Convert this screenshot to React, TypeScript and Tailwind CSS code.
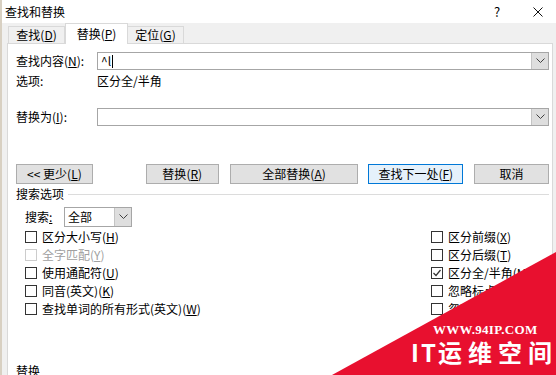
import React from 'react';

const leftOptions = [
  { label: '区分大小写', key: 'H' },
  { label: '全字匹配', key: 'Y', disabled: true },
  { label: '使用通配符', key: 'U' },
  { label: '同音(英文)', key: 'K' },
  { label: '查找单词的所有形式(英文)', key: 'W' },
];

const rightOptions = [
  { label: '区分前缀', key: 'X' },
  { label: '区分后缀', key: 'T' },
  { label: '区分全/半角', key: 'M', checked: true },
  { label: '忽略标点符号', key: 'S' },
  { label: '忽略空格', key: 'W' },
];

function Chevron() {
  return (
    <svg width="9" height="6" viewBox="0 0 9 6" fill="none">
      <polyline points="0.5,0.5 4.5,4.5 8.5,0.5" stroke="#404040" strokeWidth="1" />
    </svg>
  );
}

function DropButton() {
  return (
    <div className="w-[17px] h-full flex items-center justify-center bg-[#dedede] border-l border-[#c4c4c4]">
      <Chevron />
    </div>
  );
}

function Key({ k }: { k: string }) {
  return (
    <span>
      (<u className="underline-offset-1">{k}</u>)
    </span>
  );
}

function Checkbox({ label, k, checked, disabled }: { label: string; k: string; checked?: boolean; disabled?: boolean }) {
  return (
    <div className={`h-[18px] flex items-center gap-[5px] ${disabled ? 'text-[#a0a0a0]' : 'text-black'}`}>
      <div className={`w-[12px] h-[12px] border bg-white flex items-center justify-center ${disabled ? 'border-[#cccccc]' : 'border-[#333333]'}`}>
        {checked && (
          <svg width="10" height="10" viewBox="0 0 10 10" fill="none">
            <polyline points="1.5,5 4,7.5 8.5,2" stroke="#333" strokeWidth="1.2" />
          </svg>
        )}
      </div>
      <span className="whitespace-nowrap">
        {label}
        <Key k={k} />
      </span>
    </div>
  );
}

function Btn({ children, primary, className = '' }: { children: React.ReactNode; primary?: boolean; className?: string }) {
  return (
    <div
      className={`h-[20px] flex items-center justify-center border ${
        primary ? 'bg-[#e5f1fb] border-[#0078d7]' : 'bg-[#e1e1e1] border-[#adadad]'
      } ${className}`}
    >
      {children}
    </div>
  );
}

export default function App() {
  return (
    <div className="relative w-[556px] h-[375px] overflow-hidden bg-white text-[12px] leading-none text-black font-['Noto_Sans_CJK_SC',sans-serif]">
      {/* title bar */}
      <div className="h-[23px] flex items-center pl-[3px] border-l-2 border-[#d8d0c2]">
        <span className="flex-1">查找和替换</span>
        <span className="w-[20px] text-[13px]">?</span>
        <div className="w-[42px] flex justify-center pl-[6px]">
          <svg width="10" height="10" viewBox="0 0 10 10">
            <path d="M0.5 0.5 L9.5 9.5 M9.5 0.5 L0.5 9.5" stroke="#111" strokeWidth="1" />
          </svg>
        </div>
      </div>

      <div className="flex h-[352px] bg-[#f0f0f0] border-l-2 border-[#d8d0c2]">
        <div className="w-[5px]" />
        <div className="flex-1 flex flex-col">
          {/* tabs */}
          <div className="h-[26px] flex items-end pl-px">
            <div className="w-[57px] h-[17px] flex items-center justify-center border border-b-0 border-[#d9d9d9] bg-[#f0f0f0]">
              查找<Key k="D" />
            </div>
            <div className="w-[63px] h-[21px] -mb-px flex items-center justify-center border border-b-0 border-[#d9d9d9] bg-white relative z-10">
              替换<Key k="P" />
            </div>
            <div className="w-[56px] h-[17px] flex items-center justify-center border border-b-0 border-l-0 border-[#d9d9d9] bg-[#f0f0f0]">
              定位<Key k="G" />
            </div>
          </div>

          {/* panel */}
          <div className="w-[546px] flex-1 bg-white border-t border-l border-r border-[#d9d9d9] pl-[8px] pr-[3px] pt-[8px] flex flex-col">
            <div className="h-[18px] flex items-center">
              <span className="w-[81px]">
                查找内容<Key k="N" />:
              </span>
              <div className="flex-1 h-full flex border border-[#a6a6a6]">
                <div className="flex-1 flex items-center pl-[3px]">
                  ^l<span className="ml-px w-px h-[13px] bg-black" />
                </div>
                <DropButton />
              </div>
            </div>
            <div className="h-[18px] mt-[2px] flex items-center">
              <span className="w-[81px]">选项:</span>
              <span>区分全/半角</span>
            </div>
            <div className="h-[18px] mt-[18px] flex items-center">
              <span className="w-[81px]">
                替换为<Key k="I" />:
              </span>
              <div className="flex-1 h-full flex border border-[#a6a6a6]">
                <div className="flex-1" />
                <DropButton />
              </div>
            </div>

            {/* buttons */}
            <div className="h-[20px] mt-[38px] flex items-center">
              <Btn className="w-[77px]">
                &lt;&lt; 更少<Key k="L" />
              </Btn>
              <Btn className="w-[73px] ml-[53px]">
                替换<Key k="R" />
              </Btn>
              <Btn className="w-[129px] ml-[11px]">
                全部替换<Key k="A" />
              </Btn>
              <Btn primary className="w-[95px] ml-[10px]">
                查找下一处<Key k="F" />
              </Btn>
              <Btn className="w-[75px] ml-[11px]">取消</Btn>
            </div>

            {/* search options */}
            <div className="h-[14px] mt-[3px] flex items-center gap-[4px]">
              <span>搜索选项</span>
              <div className="flex-1 h-px bg-[#dcdcdc]" />
            </div>
            <div className="h-[20px] mt-[6px] flex items-center pl-[9px]">
              <span className="w-[39px]">
                搜索<u>:</u>
              </span>
              <div className="w-[68px] h-full flex border border-[#a6a6a6]">
                <div className="flex-1 flex items-center pl-[3px]">全部</div>
                <DropButton />
              </div>
            </div>

            <div className="mt-px flex pl-[9px]">
              <div className="w-[406px] flex flex-col">
                {leftOptions.map((o) => (
                  <Checkbox key={o.label} label={o.label} k={o.key} disabled={o.disabled} />
                ))}
              </div>
              <div className="flex flex-col">
                {rightOptions.map((o) => (
                  <Checkbox key={o.label} label={o.label} k={o.key} checked={o.checked} />
                ))}
              </div>
            </div>

            <div className="h-[14px] mt-[46px] flex items-center">替换</div>
          </div>
        </div>
        <div className="w-[1px]" />
      </div>

      {/* watermark overlay */}
      <svg className="absolute left-0 top-0" width="556" height="375" viewBox="0 0 556 375">
        <polygon points="556,252 556,375 332,375" fill="#e8102f" />
      </svg>
      <div className="absolute left-[433px] top-[323px] text-white text-[13px] font-bold tracking-[0.3px] font-['Liberation_Serif',serif]">
        WWW.94IP.COM
      </div>
      <div className="absolute left-[411px] top-[340px] text-white text-[24px] font-bold whitespace-nowrap flex">
        <span className="tracking-[2px]">IT</span>
        <span className="tracking-[6px]">运维空</span>
        <span>间</span>
      </div>
    </div>
  );
}
